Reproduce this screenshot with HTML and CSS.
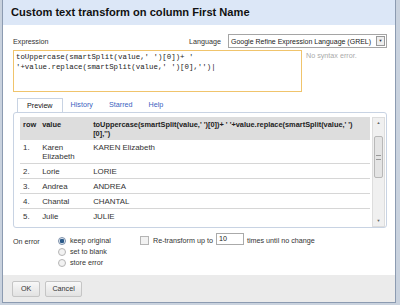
FILE: index.html
```html
<!DOCTYPE html>
<html lang="en">

<head>
  <meta charset="UTF-8">
  <title>Custom text transform</title>
  <link rel="stylesheet" href="styles.css">
</head>

<body>
  <div class="dialog">
    <div class="dialogHeader">Custom text transform on column First Name</div>

    <div class="dialogBody">
      <div class="exprTop">
        <span>Expression</span>
        <span class="langPick">
          Language
          <span class="langSelect">Google Refine Expression Language (GREL)<span class="dropBtn">&#9660;</span></span>
        </span>
      </div>

      <div class="exprRow">
        <div class="exprBox">toUppercase(smartSplit(value,' ')[0])+ '<br>'+value.replace(smartSplit(value,' ')[0],'')|</div>
        <div class="exprStatus">No syntax error.</div>
      </div>

      <div class="tabs">
        <span class="tab active">Preview</span>
        <span class="tab">History</span>
        <span class="tab">Starred</span>
        <span class="tab">Help</span>
      </div>

      <div class="tabPanel">
        <div class="previewWrap">
          <table class="preview">
            <tr class="headRow">
              <th class="colRow">row</th>
              <th class="colValue">value</th>
              <th>toUppercase(smartSplit(value,' ')[0])+ ' '+value.replace(smartSplit(value,' ')<br>[0],'')</th>
            </tr>
            <tr><td>1.</td><td>Karen Elizabeth</td><td>KAREN Elizabeth</td></tr>
            <tr><td>2.</td><td>Lorie</td><td>LORIE</td></tr>
            <tr><td>3.</td><td>Andrea</td><td>ANDREA</td></tr>
            <tr><td>4.</td><td>Chantal</td><td>CHANTAL</td></tr>
            <tr><td>5.</td><td>Julie</td><td>JULIE</td></tr>
          </table>
        </div>
        <div class="scrollbar">
          <span class="arrow">&#9650;</span>
          <span class="thumb"><span class="grip"></span></span>
          <span class="arrow">&#9660;</span>
        </div>
      </div>

      <div class="options">
        <span class="optLabel">On error</span>
        <div class="radios">
          <label><span class="radio checked"></span>keep original</label>
          <label><span class="radio"></span>set to blank</label>
          <label><span class="radio"></span>store error</label>
        </div>
        <div class="repeat">
          <span class="checkbox"></span>Re-transform up to
          <span class="repeatInput">10</span>
          times until no change
        </div>
      </div>
    </div>

    <div class="dialogFooter">
      <span class="btn okBtn">OK</span>
      <span class="btn">Cancel</span>
    </div>
  </div>
</body>

</html>
```

FILE: styles.css
```css
body {
  margin: 0;
  background-color: #c9d2de;
  font-family: "Liberation Sans", Arial, sans-serif;
  font-size: 7.2px;
  color: #333;
}

.dialog {
  width: 392px;
  height: 302px;
  margin-left: 2px;
  border: 1px solid #8c9bb1;
  border-top: none;
  background: #fff;
  display: flex;
  flex-direction: column;
}

.dialogHeader {
  height: 25px;
  line-height: 25px;
  padding-left: 8px;
  background-color: #dce7f7;
  font-size: 11.1px;
  font-weight: bold;
  color: #111;
}

.dialogBody {
  flex: 1;
  padding: 8px 8px 0 10px;
}

.exprTop {
  display: flex;
  justify-content: space-between;
  align-items: center;
  height: 16px;
}

.langPick {
  display: flex;
  align-items: center;
  gap: 7px;
  margin-right: 0;
}

.langSelect {
  display: flex;
  align-items: center;
  justify-content: space-between;
  box-sizing: border-box;
  width: 159px;
  height: 14px;
  padding-left: 2px;
  border: 1px solid #a5a5a5;
  font-size: 7px;
  color: #222;
}

.dropBtn {
  width: 7px;
  height: 8px;
  margin-right: 1px;
  border: 1px solid #999;
  background: #eee;
  font-size: 4px;
  line-height: 8px;
  text-align: center;
  color: #333;
}

.exprRow {
  display: flex;
  gap: 4px;
  margin-top: 1px;
}

.exprBox {
  width: 283px;
  height: 38px;
  padding: 1px 2px;
  border: 1px solid #f0c46c;
  font-family: "Liberation Mono", "Courier New", monospace;
  font-size: 7.4px;
  line-height: 10px;
  color: #222;
}

.exprStatus {
  color: #aaa;
  padding-top: 1px;
}

.tabs {
  display: flex;
  margin-top: 6px;
  padding-left: 4px;
  height: 14px;
}

.tab {
  padding: 0 8px;
  line-height: 14px;
  color: #3b5fc0;
}

.tab.active {
  background: #fff;
  border: 1px solid #c8d3e3;
  border-bottom: none;
  color: #111;
  padding: 0 9px;
}

.tabPanel {
  height: 110px;
  border: 1px solid #c8d3e3;
  border-radius: 3px;
  padding: 4px 1px 0 6px;
  display: flex;
  gap: 2px;
}

.previewWrap {
  flex: 1;
  overflow: hidden;
}

.preview {
  width: 100%;
  border-collapse: collapse;
  font-size: 7.9px;
}

.preview th {
  background-color: #dddddd;
  text-align: left;
  font-weight: bold;
  font-size: 7.4px;
  color: #222;
  padding: 3px 3px 2px;
  vertical-align: top;
  line-height: 9px;
}

.preview td {
  padding: 3px 3px 2px;
  border-bottom: 1px solid #d6d6d6;
  vertical-align: top;
  line-height: 9px;
  color: #333;
}

.preview tr:last-child td {
  border-bottom: none;
}

.colRow {
  width: 13px;
}

.colValue {
  width: 45px;
}

.scrollbar {
  width: 11px;
  display: flex;
  flex-direction: column;
  background: #f0f0f0;
  border: 1px solid #ddd;
  font-size: 4px;
  color: #666;
}

.arrow {
  height: 10px;
  line-height: 10px;
  text-align: center;
}

.thumb {
  height: 40px;
  margin: 8px 1px 0;
  border: 1px solid #b8b8b8;
  border-radius: 2px;
  background: #e4e4e4;
  display: flex;
  align-items: center;
  justify-content: center;
}

.grip {
  width: 5px;
  height: 3px;
  border-top: 1px solid #999;
  border-bottom: 1px solid #999;
}

.scrollbar .arrow:last-child {
  margin-top: auto;
}

.options {
  display: flex;
  margin-top: 8px;
}

.optLabel {
  width: 45px;
  padding-top: 1px;
}

.radios {
  display: flex;
  flex-direction: column;
  gap: 2px;
  width: 82px;
}

.radios label {
  display: flex;
  align-items: center;
  gap: 4px;
  height: 9px;
}

.radio {
  width: 6px;
  height: 6px;
  border: 1px solid #b5b5b5;
  border-radius: 50%;
  background: #f2f2f2;
}

.radio.checked {
  background: radial-gradient(circle, #2a5a8a 0 2px, #dfe8f2 2.5px);
  border-color: #7a8ea8;
}

.repeat {
  display: flex;
  align-items: flex-start;
  gap: 3px;
}

.checkbox {
  width: 7px;
  height: 7px;
  border: 1px solid #b5b5b5;
  background: #f2f2f2;
  margin-right: 1px;
}

.repeatInput {
  width: 24px;
  height: 10px;
  padding-left: 2px;
  margin: -3px 0 0;
  line-height: 10px;
  border: 1px solid #aaa;
  color: #222;
}

.dialogFooter {
  height: 27px;
  background-color: #ebebeb;
  display: flex;
  align-items: center;
  gap: 5px;
  padding-left: 9px;
}

.btn {
  height: 14px;
  line-height: 14px;
  padding: 0 6px;
  border: 1px solid #c5c5c5;
  border-radius: 2px;
  background: linear-gradient(#f8f8f8, #e2e2e2);
  color: #333;
}

.okBtn {
  padding: 0 8px;
}
```
